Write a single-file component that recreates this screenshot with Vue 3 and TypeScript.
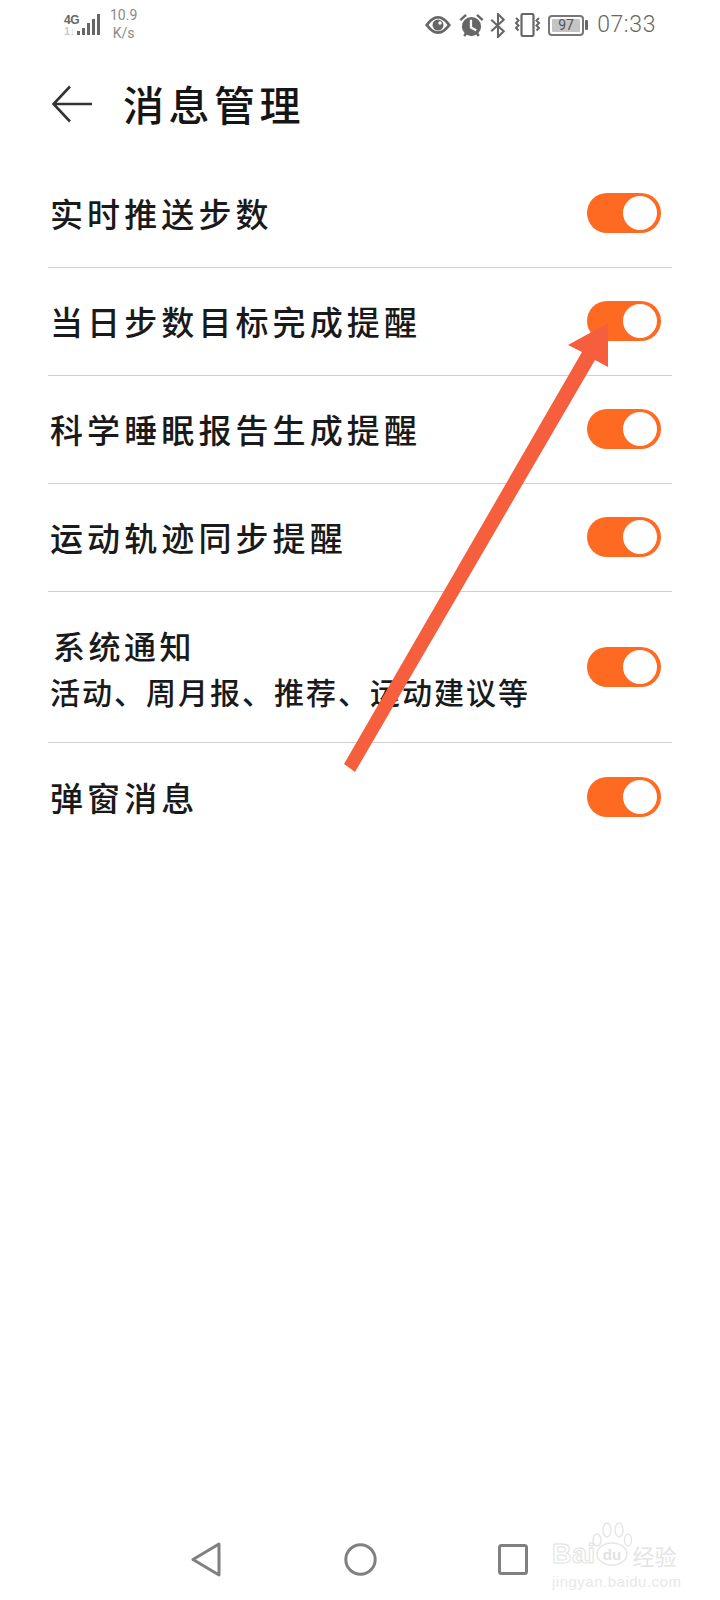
<script setup lang="ts">
interface Row { title: string; sub?: string }
const rows: Row[] = [
  { title: '实时推送步数' },
  { title: '当日步数目标完成提醒' },
  { title: '科学睡眠报告生成提醒' },
  { title: '运动轨迹同步提醒' },
  { title: '系统通知', sub: '活动、周月报、推荐、运动建议等' },
  { title: '弹窗消息' },
]
</script>

<template>
  <div class="page">
    <div class="status">
      <div class="status-left">
        <div class="net">
          <span class="net-top">4G</span>
          <span class="net-bot">1↓</span>
        </div>
        <svg class="bars" width="24" height="22" viewBox="0 0 24 22">
          <rect x="1" y="17" width="3" height="4" fill="#666" />
          <rect x="6" y="14" width="3" height="7" fill="#666" />
          <rect x="11" y="9" width="3" height="12" fill="#666" />
          <rect x="16" y="5" width="3" height="16" fill="#666" />
          <rect x="21" y="0" width="3" height="21" fill="#666" />
        </svg>
        <div class="speed"><span>10.9</span><span class="speed-unit">K/s</span></div>
      </div>
      <div class="status-right">
        <svg class="ic-eye" width="28" height="20" viewBox="0 0 27 20">
          <path d="M0.500 10C5 4 9 1 13.500 1S22 4 26.500 10c-4.500 6-8.500 9-13 9S5 16 0.500 10z" fill="#666" />
          <path d="M4 10C7.500 5.500 10.500 3.800 13.500 3.800s6 1.700 9.500 6.200c-3.500 4.500-6.500 6.200-9.500 6.200S7.500 14.500 4 10z" fill="#fff" />
          <circle cx="13.500" cy="10" r="5.500" fill="#666" />
          <circle cx="15.500" cy="8" r="1.700" fill="#fff" />
        </svg>
        <svg class="ic-alarm" width="25" height="25" viewBox="0 0 24 24">
          <path d="M0.500 6l5.500-5 1.500 1.700-5.500 5zM23.500 6l-5.500-5-1.500 1.700 5.500 5z" fill="#666" />
          <path d="M5 22l2.500-3.500M19 22l-2.500-3.500" stroke="#666" stroke-width="2.400" />
          <circle cx="12" cy="13" r="9.200" fill="#666" />
          <path d="M11.500 6.500v7.500l5 2.500" fill="none" stroke="#fff" stroke-width="2.200" />
        </svg>
        <svg class="ic-bt" width="16" height="25" viewBox="0 0 15 24">
          <path d="M1 6.500l12 11L7.500 23V1l5.500 5.500L1 17.500" fill="none" stroke="#666" stroke-width="2" />
        </svg>
        <svg class="ic-vib" width="29" height="24" viewBox="0 0 29 24">
          <rect x="8.500" y="1" width="12" height="22" rx="1.500" fill="none" stroke="#666" stroke-width="2.200" />
          <path d="M3 5l2.500 2.500L3 10l2.500 2.500L3 15l2.500 2.500M26 5l-2.500 2.500L26 10l-2.500 2.500L26 15l-2.500 2.500" fill="none" stroke="#666" stroke-width="2" />
        </svg>
        <div class="battery">
          <div class="battery-body"><span class="battery-fill">97</span></div>
          <div class="battery-nub"></div>
        </div>
        <span class="time">07:33</span>
      </div>
    </div>

    <header class="header">
      <svg class="back" width="40" height="38" viewBox="0 0 40 38">
        <path d="M18 1.500L1.500 19 18 36.500M1.500 19H40" fill="none" stroke="#333" stroke-width="2.600" />
      </svg>
      <h1 class="title">消息管理</h1>
    </header>

    <ul class="list">
      <li v-for="row in rows" :key="row.title" class="row" :class="{ tall: row.sub }">
        <div class="texts">
          <div class="label">{{ row.title }}</div>
          <div v-if="row.sub" class="sub">{{ row.sub }}</div>
        </div>
        <div class="toggle"><div class="knob"></div></div>
      </li>
    </ul>

    <nav class="nav">
      <svg width="30" height="35" viewBox="0 0 30 35">
        <path d="M28 2L2 17.500 28 33z" fill="none" stroke="#808080" stroke-width="3" stroke-linejoin="round" />
      </svg>
      <svg width="33" height="33" viewBox="0 0 33 33">
        <circle cx="16.500" cy="16.500" r="14.700" fill="none" stroke="#808080" stroke-width="3" />
      </svg>
      <svg width="30" height="31" viewBox="0 0 30 31">
        <rect x="1.500" y="1.500" width="27" height="28" rx="2" fill="none" stroke="#808080" stroke-width="3" />
      </svg>
    </nav>

    <svg class="arrow" width="720" height="800" viewBox="0 0 720 800">
      <defs>
        <filter id="soft"><feGaussianBlur stdDeviation="0.700" /></filter>
      </defs>
      <path d="M608 323L568 345 582 352 344 764 355 772 595 360 608 367z" fill="#f55f3d" filter="url(#soft)" />
    </svg>

    <div class="mark">
      <div class="mark-top">
        <span class="mark-bai">Bai</span>
        <svg class="paw" width="40" height="46" viewBox="0 0 40 46">
          <ellipse cx="20" cy="32" rx="15" ry="11" fill="none" stroke="#e6e6e6" stroke-width="1.500" />
          <ellipse cx="5" cy="18" rx="4" ry="6" fill="none" stroke="#e6e6e6" stroke-width="1.500" />
          <ellipse cx="15" cy="8" rx="4" ry="7" fill="none" stroke="#e6e6e6" stroke-width="1.500" />
          <ellipse cx="27" cy="8" rx="4" ry="7" fill="none" stroke="#e6e6e6" stroke-width="1.500" />
          <ellipse cx="36" cy="18" rx="3.500" ry="6" fill="none" stroke="#e6e6e6" stroke-width="1.500" />
          <text x="20" y="38" text-anchor="middle" class="paw-text">du</text>
        </svg>
        <span class="mark-cn">经验</span>
      </div>
      <div class="mark-url">jingyan.baidu.com</div>
    </div>
  </div>
</template>

<style>
html, body { margin: 0; background: #fff; }
</style>

<style scoped>
.page {
  position: relative;
  width: 720px;
  height: 1600px;
  background: #fff;
  display: flex;
  flex-direction: column;
  overflow: hidden;
  font-family: "Noto Sans CJK SC", "Noto Sans", sans-serif;
}
.status {
  height: 48px;
  display: flex;
  justify-content: space-between;
  align-items: center;
  padding: 0 64px 0 64px;
  color: #777;
  font-family: Roboto, sans-serif;
}
.status-left { display: flex; align-items: center; }
.net {
  width: 13px;
  display: flex;
  flex-direction: column;
  font-size: 12px;
  line-height: 11px;
  font-weight: 700;
  letter-spacing: -0.500px;
  color: #666;
  font-family: "Liberation Sans", sans-serif;
  margin-top: 3px;
}
.net-bot { color: #ccc; font-size: 11px; }
.bars { margin: 2px 0 0 -1px; }
.speed {
  display: flex;
  flex-direction: column;
  align-items: center;
  margin-left: 10px;
  font-size: 14px;
  line-height: 18px;
  color: #8a8a8a;
}
.status-right { display: flex; align-items: center; margin-top: 2px; }
.ic-alarm { margin-left: 7px; }
.ic-bt { margin-left: 6px; }
.ic-vib { margin-left: 7px; }
.battery { display: flex; align-items: center; margin-left: 6px; }
.battery-body {
  box-sizing: border-box;
  width: 36px;
  height: 21px;
  border: 2px solid #777;
  border-radius: 4px;
  padding: 2px;
  display: flex;
}
.battery-fill {
  flex: 1;
  background: #c4c4c4;
  border-radius: 1px;
  font-size: 14px;
  line-height: 13px;
  text-align: center;
  color: #555;
}
.battery-nub { width: 3px; height: 10px; margin-left: 1px; background: #666; border-radius: 1px; }
.time { margin-left: 9px; font-size: 23px; font-weight: 300; line-height: 26px; letter-spacing: 0.600px; color: #666; }

.header {
  height: 112px;
  display: flex;
  align-items: center;
  padding: 0 0 2px 52px;
  box-sizing: border-box;
}
.back { flex: none; margin-top: 1px; }
.title {
  margin: 0 0 0 31px;
  font-size: 41px;
  line-height: 50px;
  font-weight: 500;
  letter-spacing: 4.500px;
  color: #151515;
}

.list {
  list-style: none;
  margin: 0 48px;
  padding: 0;
}
.row {
  box-sizing: border-box;
  height: 108px;
  display: flex;
  align-items: center;
  justify-content: space-between;
  padding: 0 11px 1px 2px;
  border-bottom: 1px solid #cfcfcf;
}
.row:last-child { border-bottom: 0; padding-bottom: 0; }
.row.tall { height: 151px; }
.label {
  font-size: 33px;
  line-height: 44px;
  font-weight: 500;
  letter-spacing: 4.100px;
  color: #1a1a1a;
}
.tall .label { font-size: 32px; letter-spacing: 3.500px; padding-left: 3px; margin-top: 1px; }
.sub {
  margin-top: 4px;
  font-size: 30px;
  line-height: 40px;
  font-weight: 500;
  letter-spacing: 2px;
  color: #1a1a1a;
}
.toggle {
  flex: none;
  box-sizing: border-box;
  width: 74px;
  height: 40px;
  padding: 3px 4px;
  border-radius: 20px;
  background: #ff6a22;
  display: flex;
  justify-content: flex-end;
}
.knob { width: 34px; height: 34px; border-radius: 50%; background: #fff; }

.nav {
  box-sizing: border-box;
  margin-top: auto;
  height: 57px;
  padding: 0 0 24px 191px;
  display: flex;
  align-items: center;
}
.nav svg:nth-child(2) { margin-left: 123px; }
.nav svg:nth-child(3) { margin-left: 121px; }

.arrow { position: absolute; left: 0; top: 0; pointer-events: none; }

.mark {
  position: absolute;
  left: 552px;
  top: 1522px;
  width: 150px;
  color: #e4e4e4;
  font-family: "Liberation Sans", sans-serif;
}
.mark-top { display: flex; align-items: flex-end; height: 46px; }
.mark-bai {
  font-size: 27px;
  line-height: 28px;
  font-weight: 700;
  color: #fff;
  -webkit-text-stroke: 1px #e2e2e2;
  letter-spacing: 0.500px;
}
.paw { margin-left: -4px; }
.paw-text { font: 700 15px "Liberation Sans", sans-serif; fill: #e2e2e2; }
.mark-cn {
  font-family: "Noto Sans CJK SC", sans-serif;
  font-size: 22px;
  line-height: 26px;
  margin-left: 1px;
  color: #e4e4e4;
}
.mark-url {
  margin-top: 5px;
  font-size: 15px;
  line-height: 17px;
  letter-spacing: 0.500px;
  color: #e8e8e8;
  white-space: nowrap;
}
</style>
